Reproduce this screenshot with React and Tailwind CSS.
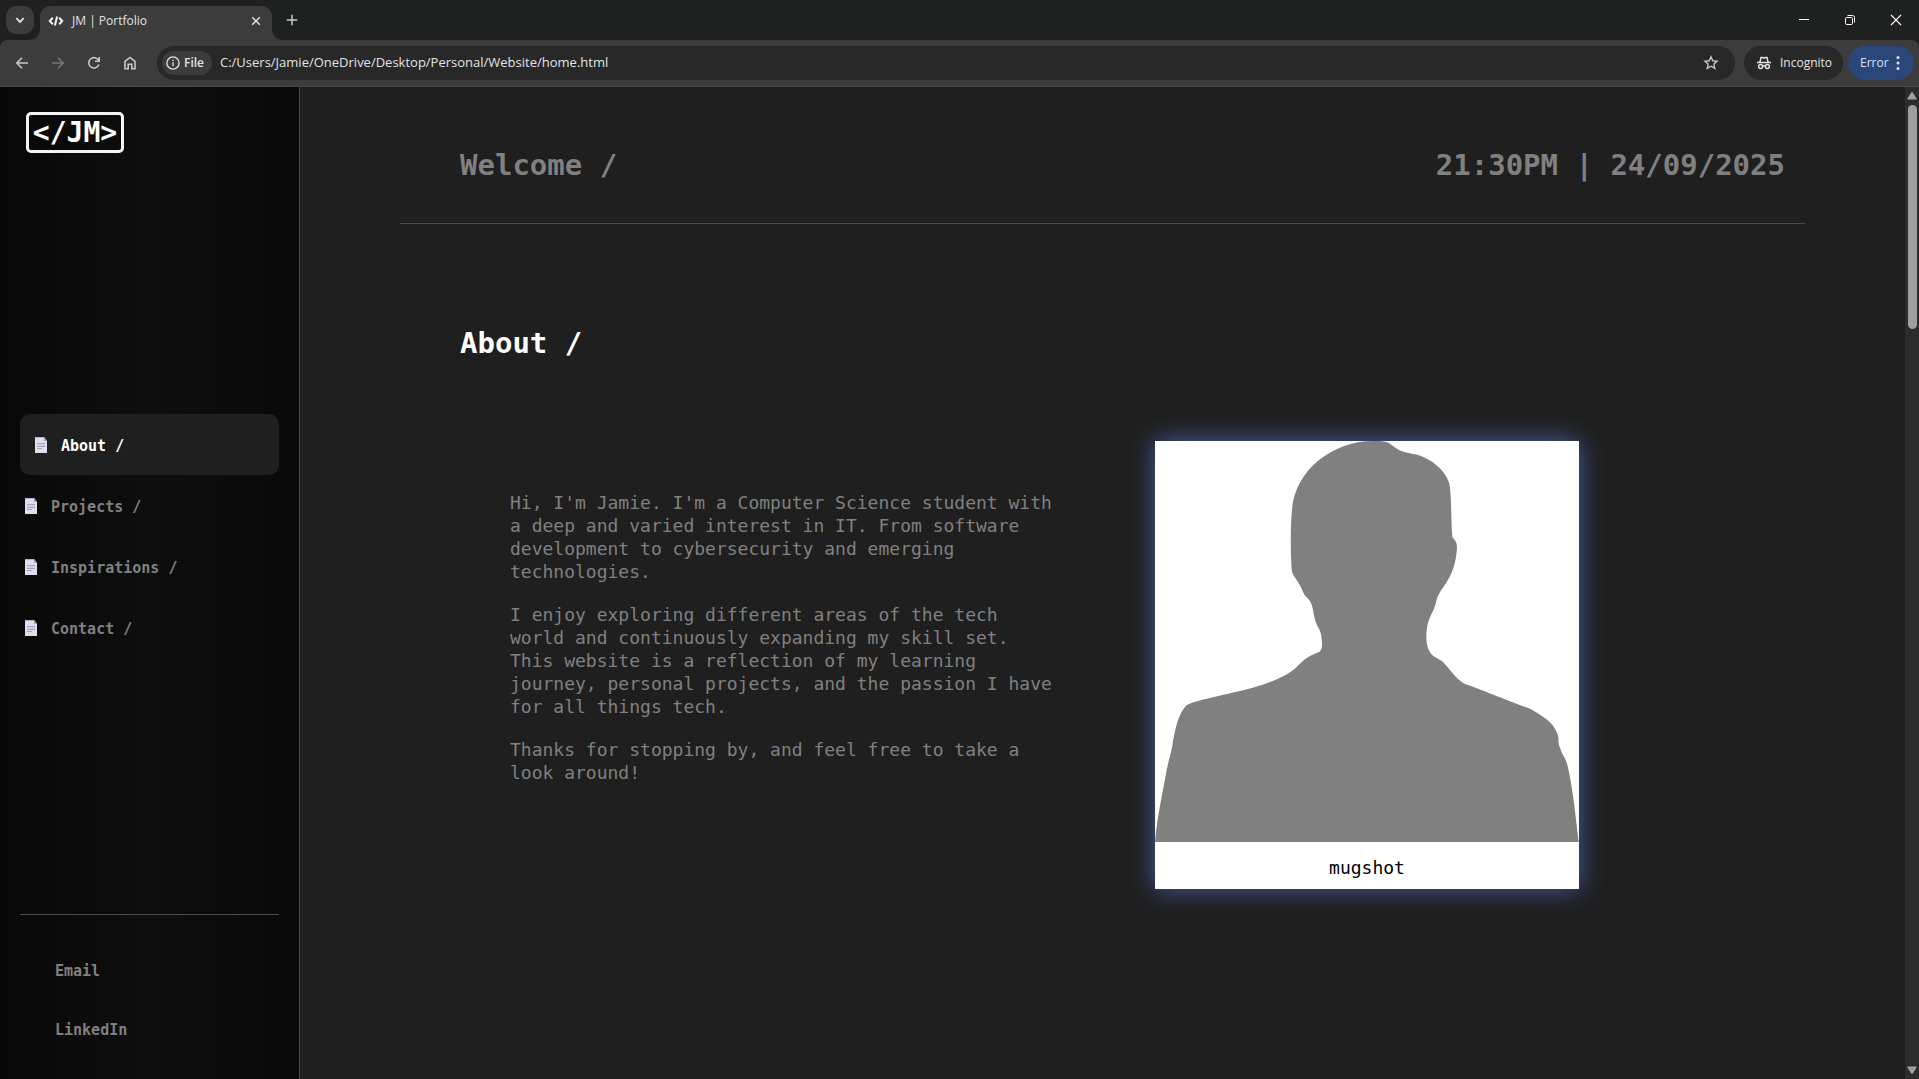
import React from "react";

const MONO = "font-['DejaVu_Sans_Mono',monospace]";
const UI = "font-['Open_Sans','Noto_Sans',sans-serif]";

function Icon({ className, children, width = 1.6 }) {
  return (
    <svg
      viewBox="0 0 16 16"
      className={className}
      fill="none"
      stroke="currentColor"
      strokeWidth={width}
      aria-hidden="true"
    >
      {children}
    </svg>
  );
}

function TabStrip() {
  return (
    <div className="flex h-10 items-end bg-[#1f2120] pl-1.5">
      <button
        aria-label="Search tabs"
        className="mb-1.5 flex size-7 items-center justify-center rounded-[10px] bg-[#3c3c3c] text-[#e3e3e3]"
      >
        <Icon className="size-4" width={1.8}>
          <path d="M4.3 6.2 8 9.9l3.7-3.7" />
        </Icon>
      </button>
      <svg viewBox="0 0 10 10" className="-ml-1 size-2.5 fill-[#3c3c3c]" aria-hidden="true">
        <path d="M10 0A10 10 0 0 1 0 10h10z" />
      </svg>
      <div className="flex h-[34px] w-[232px] items-center rounded-t-[10px] bg-[#3c3c3c] px-2 pb-1">
        <Icon className="size-4 text-[#f1f1f1]" width={2}>
          <path d="M4.8 4.8 1.8 8l3 3.2M11.2 4.8l3 3.2-3 3.2M9.1 3.6 6.9 12.4" />
        </Icon>
        <span className="ml-2 flex-1 text-xs text-[#e3e3e3]">JM | Portfolio</span>
        <button aria-label="Close tab" className="flex size-4 items-center justify-center text-[#e3e3e3]">
          <Icon className="size-4" width={1.5}>
            <path d="m4.2 4.2 7.6 7.6m0-7.6-7.6 7.6" />
          </Icon>
        </button>
      </div>
      <svg viewBox="0 0 10 10" className="size-2.5 fill-[#3c3c3c]" aria-hidden="true">
        <path d="M0 0a10 10 0 0 0 10 10H0z" />
      </svg>
      <button aria-label="New tab" className="mb-3 ml-0.5 flex size-4 items-center justify-center text-[#c7c7c7]">
        <Icon className="size-4" width={1.5}>
          <path d="M8 2.8v10.4M2.8 8h10.4" />
        </Icon>
      </button>
      <div className="ml-auto flex h-full items-center text-white">
        <button aria-label="Minimize" className="flex h-full w-[46px] items-center justify-center">
          <Icon className="size-4" width={1}>
            <path d="M3 7.5h10" />
          </Icon>
        </button>
        <button aria-label="Restore" className="flex h-full w-[46px] items-center justify-center">
          <Icon className="size-4" width={1}>
            <rect x="3.5" y="5.5" width="7" height="7" rx="1.2" />
            <path d="M5.5 3.5h5a2 2 0 0 1 2 2v5" />
          </Icon>
        </button>
        <button aria-label="Close" className="flex h-full w-[46px] items-center justify-center">
          <Icon className="size-4" width={1.1}>
            <path d="m3 3 10 10m0-10L3 13" />
          </Icon>
        </button>
      </div>
    </div>
  );
}

function Toolbar() {
  return (
    <div className="bg-[#1f2120]">
      <div className="flex h-[47px] items-center rounded-t-[8px] border-b border-[#4a4a4a] bg-[#3c3c3c] pr-[5px]">
        <div className="flex w-[157px] items-center gap-5 pl-3.5 text-[#c7c7c7]">
          <button aria-label="Back">
            <Icon className="size-4">
              <path d="M14 8H3m5-5.2L2.8 8 8 13.2" />
            </Icon>
          </button>
          <button aria-label="Forward" disabled className="text-[#757575]">
            <Icon className="size-4">
              <path d="M2 8h11M8 2.8 13.2 8 8 13.2" />
            </Icon>
          </button>
          <button aria-label="Reload">
            <Icon className="size-4">
              <path d="M12.9 9.6A5.2 5.2 0 1 1 12.6 5.4M13.2 2v4.2H9" />
            </Icon>
          </button>
          <button aria-label="Home">
            <Icon className="size-4">
              <path d="M3 6.4 8 2.4l5 4v7.3H9.8V9.2H6.2v4.5H3z" />
            </Icon>
          </button>
        </div>
        <div className="flex h-[34px] flex-1 items-center rounded-full bg-[#282828] pr-4 pl-[5px]">
          <button className="flex h-6 items-center gap-1 rounded-full bg-[#3c3c3c] px-1 pr-2 text-xs font-semibold text-[#e3e3e3]">
            <Icon className="size-3.5" width={1.5}>
              <circle cx="8" cy="8" r="7" />
              <path d="M8 7v4.6M8 4.2v1.6" />
            </Icon>
            File
          </button>
          <input
            aria-label="Address"
            readOnly
            defaultValue="C:/Users/Jamie/OneDrive/Desktop/Personal/Website/home.html"
            className="ml-2 min-w-0 flex-1 bg-transparent text-[13px] text-[#e3e3e3] outline-none"
          />
          <button aria-label="Bookmark this page" className="text-[#c7c7c7]">
            <Icon className="size-4" width={1.4}>
              <path d="m8 1.8 1.8 4 4.3.4-3.2 2.9.9 4.3L8 11.2l-3.8 2.2.9-4.3-3.2-2.9 4.3-.4z" />
            </Icon>
          </button>
        </div>
        <div className="ml-[9px] flex h-[34px] w-[99px] items-center gap-2 rounded-full bg-[#282828] pl-3 text-xs text-[#e3e3e3]">
          <Icon className="size-4" width={1.5}>
            <path d="M1 7.6h14M3.9 7.2 5 2.6h1.6L8 3.2l1.4-.6H11l1.1 4.6" />
            <circle cx="4.6" cy="11.6" r="2" />
            <circle cx="11.4" cy="11.6" r="2" />
            <path d="M6.6 11.2q1.4-.7 2.8 0" />
          </Icon>
          Incognito
        </div>
        <button className="ml-[5px] flex h-[34px] w-[66px] items-center justify-between rounded-full bg-[#2b4678] pr-2 pl-3 text-xs text-[#d3e3fd]">
          Error
          <svg viewBox="0 0 16 16" className="size-4 fill-current" aria-hidden="true">
            <circle cx="8" cy="2.6" r="1.5" />
            <circle cx="8" cy="8" r="1.5" />
            <circle cx="8" cy="13.4" r="1.5" />
          </svg>
        </button>
      </div>
    </div>
  );
}

function PageIcon() {
  return (
    <svg viewBox="0 0 12 16" className="mb-0.5 h-4 w-3 shrink-0" aria-hidden="true">
      <path d="M0 0h9l3 4v12H0z" fill="#e3dcf0" />
      <path d="M0 0h9v1H0z" fill="#b9b2c6" />
      <path d="M9 0l3 4H9z" fill="#a79fb5" />
      <path d="M2 6.5h8M2 9.5h8M2 11.5h5" stroke="#a9a2b6" />
      <path d="M2 8h8" stroke="#cbc4d8" />
    </svg>
  );
}

const links = ["About /", "Projects /", "Inspirations /", "Contact /"];

function Sidebar() {
  return (
    <aside className="flex w-[300px] shrink-0 flex-col border-r border-[#4a4a4a] bg-linear-to-r from-[#080808] via-[#0e0e0e] to-[#090909] px-5 text-[15px] font-bold text-[#808080]">
      <a
        href="#home"
        className="mt-[25px] ml-1.5 flex h-[41px] w-[98px] items-center justify-center rounded-[5px] border-[3px] border-[#f4f4f4] text-[28px] leading-none text-white"
      >
        &lt;/JM&gt;
      </a>
      <nav className="my-auto flex flex-col pt-1">
        {links.map((label, i) => (
          <a
            key={label}
            href="#section"
            className={
              i === 0
                ? "flex h-[61px] items-center gap-3.5 rounded-[10px] bg-[#1f1f1f] px-[15px] pt-1 text-white"
                : "flex h-[61px] items-center gap-3.5 px-[5px] pt-1"
            }
          >
            <PageIcon />
            {label}
          </a>
        ))}
      </nav>
      <div className="flex flex-col gap-[39px] border-t border-[#4a4a4a] pt-[46px] pb-[39px] pl-[35px] leading-5">
        <a href="#email">Email</a>
        <a href="#linkedin">LinkedIn</a>
      </div>
    </aside>
  );
}

function Mugshot() {
  return (
    <figure className="w-[424px] bg-white text-center text-black shadow-[0_0_24px_rgba(90,130,235,0.65)]">
      <svg viewBox="0 0 1272 1203" className="block w-full" role="img" aria-label="Silhouette of a person">
        <path
          fill="#808080"
          d="M0 1203C6 1130 22 1060 34 992C42 950 50 935 54 900C62 860 68 825 92 795C110 778 220 762 310 735C360 720 400 702 425 678C450 652 465 644 490 634C502 630 502 610 500 595C498 560 484 560 478 528C474 510 474 490 460 474C440 455 445 447 430 425C414 400 410 400 409 370C406 310 407 250 411 205C420 90 530 0 655 0C680 0 698 0 710 12C740 38 770 36 792 43C840 60 882 100 885 140C890 190 888 240 892 288C898 298 905 298 906 318C904 360 894 395 874 425C860 446 848 460 844 480C840 505 820 530 816 560C812 590 812 625 836 646C850 656 855 653 872 672C895 698 905 715 930 729C970 742 1060 780 1125 803C1165 825 1195 845 1206 875C1214 895 1208 900 1213 915C1222 945 1230 945 1238 975C1255 1050 1262 1130 1271 1203Z"
        />
      </svg>
      <figcaption className="flex h-[47px] items-center justify-center pt-1">mugshot</figcaption>
    </figure>
  );
}

function Content() {
  return (
    <main className="min-w-0 flex-1 bg-[#1f1f1f] px-[100px] text-lg leading-[23px] text-[#808080]">
      <header className="flex h-[137px] items-center justify-between border-b border-[#4a4a4a] pt-5 pr-5 pl-[60px] text-[29px] font-bold">
        <h1>Welcome /</h1>
        <p>21:30PM | 24/09/2025</p>
      </header>
      <section className="px-[60px] pt-[99px]">
        <h2 className="text-[29px] leading-10 font-bold text-white">About /</h2>
        <div className="mt-[78px] flex gap-[97px] pl-[50px]">
          <div className="flex w-[548px] flex-col gap-5 pt-[50px]">
            <p>
              Hi, I'm Jamie. I'm a Computer Science student with a deep and varied interest in IT. From
              software development to cybersecurity and emerging technologies.
            </p>
            <p>
              I enjoy exploring different areas of the tech world and continuously expanding my skill
              set. This website is a reflection of my learning journey, personal projects, and the
              passion I have for all things tech.
            </p>
            <p>Thanks for stopping by, and feel free to take a look around!</p>
          </div>
          <Mugshot />
        </div>
      </section>
    </main>
  );
}

function Scrollbar() {
  return (
    <div className="flex w-3.5 shrink-0 flex-col items-center bg-[#2c2c2c] pt-[5px] pb-[5px]" aria-hidden="true">
      <svg viewBox="0 0 10 8" className="h-2 w-2.5 fill-[#9f9f9f]">
        <path d="M4.2.6q.8-.9 1.6 0L9.6 6.6q.2 1-.8 1H1.2q-1 0-.8-1z" />
      </svg>
      <div className="mt-[5px] h-[224px] w-[9px] rounded-full bg-[#9f9f9f]" />
      <svg viewBox="0 0 10 8" className="mt-auto h-2 w-2.5 fill-[#9f9f9f]">
        <path d="M4.2 7.4q.8.9 1.6 0L9.6 1.4q.2-1-.8-1H1.2q-1 0-.8 1z" />
      </svg>
    </div>
  );
}

export default function App() {
  return (
    <div className="flex h-screen flex-col overflow-hidden bg-[#1f1f1f]">
      <div className={UI}>
        <TabStrip />
        <Toolbar />
      </div>
      <div className={`flex min-h-0 flex-1 ${MONO}`}>
        <Sidebar />
        <Content />
        <Scrollbar />
      </div>
    </div>
  );
}
